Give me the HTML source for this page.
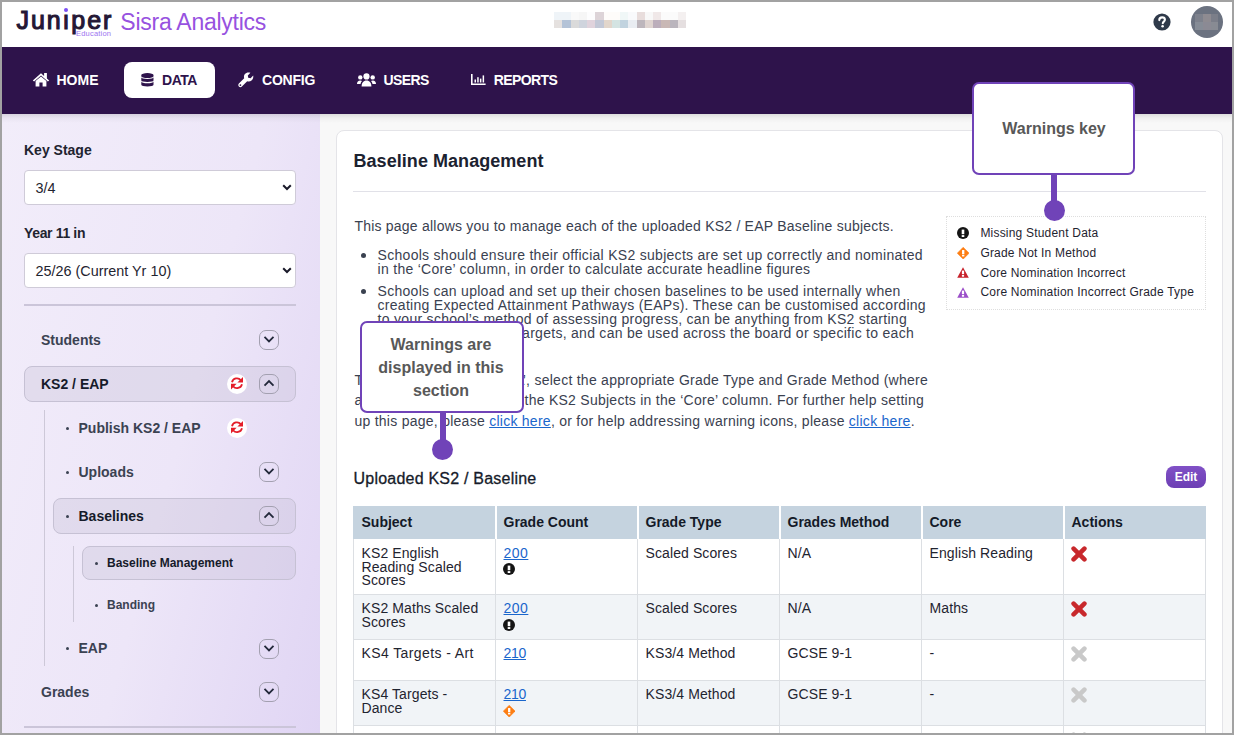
<!DOCTYPE html>
<html><head><meta charset="utf-8">
<style>
*{box-sizing:border-box}
html,body{margin:0;padding:0}
body{width:1234px;height:735px;overflow:hidden;position:relative;background:#f8f8f8;font-family:"Liberation Sans",sans-serif;color:#1f2937}
.a{position:absolute;white-space:nowrap}
#hdr{position:absolute;left:0;top:0;width:1234px;height:47px;background:#fff}
#nav{position:absolute;left:0;top:47px;width:1234px;height:67px;background:#2e134b}
.nt{position:absolute;font-weight:bold;font-size:14px;line-height:14px;color:#fff;margin-top:0.1px}
#side{position:absolute;left:0;top:114px;width:320px;height:621px;background:linear-gradient(105deg,#f2edfa 0%,#ede6f8 55%,#e0d5f4 100%)}
.lbl{position:absolute;font-weight:bold;font-size:14px;line-height:14px;color:#1f2430}
.sel{position:absolute;left:24px;width:272px;height:34.6px;background:#fff;border:1px solid #cfcbd8;border-radius:4px}
.it{position:absolute;font-weight:bold;font-size:14px;line-height:14px;color:#3b4252}
.box{position:absolute;background:rgba(195,190,212,0.32);border:1px solid #c6c1d4;border-radius:8px}
.chev{position:absolute;width:20px;height:20px;border:1.2px solid #a3a0b0;border-radius:7px}
.dot{position:absolute;width:3px;height:3px;border-radius:50%;background:#3b4252}
.vl{position:absolute;width:1px;background:#cdc8d8}
#card{position:absolute;left:336px;top:130px;width:887px;height:640px;background:#fff;border:1px solid #e4e4e8;border-radius:8px}
.tx{position:absolute;font-size:14px;line-height:14px;color:#3a4150;letter-spacing:0.25px;white-space:nowrap}
a{color:#1a66cc;text-decoration:underline}
.callout{position:absolute;width:163.5px;height:91px;background:#fff;border:2px solid #7043b8;border-radius:6px;color:#555;font-weight:bold;font-size:16px;text-align:center}
.stem{position:absolute;width:6px;background:#7043b8}
.pdot{position:absolute;width:21px;height:21px;border-radius:50%;background:#7043b8}
table{position:absolute;left:353px;top:506px;border-collapse:collapse;table-layout:fixed}
td,th{border:1px solid #dee2e6;padding:0 8px;vertical-align:top;font-size:14px;line-height:14px;color:#1f2430;text-align:left}
th{background:#c5d3df;border-color:#fff;border-bottom:0;font-weight:bold;height:33px;vertical-align:middle}
tr.g td{background:#f1f4f7}
.th{position:absolute;top:515px;font-weight:bold;font-size:14px;line-height:14px;color:#141a28;white-space:nowrap}
.td{position:absolute;font-size:14px;line-height:14px;color:#1f2430;white-space:nowrap;letter-spacing:0.1px}
.lk{letter-spacing:0.5px}
</style></head><body>

<!-- header -->
<div id="hdr">
  <div class="a" style="left:16.5px;top:7.5px;font-size:25px;line-height:25px;color:#241734;letter-spacing:1.9px;-webkit-text-stroke:1.1px #241734">Junıper</div>
  <div class="a" style="left:64px;top:8px;width:4.4px;height:4.4px;border-radius:50%;background:#7b4ff2"></div>
  <div class="a" style="left:76px;top:29.5px;font-size:7.5px;line-height:8px;color:#9c74f0;letter-spacing:0.2px">Education</div>
  <div class="a" style="left:120.3px;top:10.8px;font-size:23px;line-height:23px;color:#9752e0;letter-spacing:-0.25px">Sisra Analytics</div>
  <div class="a" style="left:554px;top:12px;width:132px;height:16px;display:grid;grid-template-columns:repeat(16,1fr);grid-template-rows:8px 8px">
    <i style="background:#eff4f8"></i><i style="background:#eff4f8"></i><i style="background:#f9f9f9"></i><i style="background:#f6f6f6"></i><i style="background:#fdfdfe"></i><i style="background:#ddd4d8"></i><i style="background:#fefcfa"></i><i style="background:#fefcfa"></i><i style="background:#f0f7f7"></i><i style="background:#f9fafc"></i><i style="background:#e8dddc"></i><i style="background:#f8f8f8"></i><i style="background:#f0e8e8"></i><i style="background:#fbfbfb"></i><i style="background:#fbfbfb"></i><i style="background:#f4f0f0"></i>
    <i style="background:#e5e1df"></i><i style="background:#b4c3d7"></i><i style="background:#dadada"></i><i style="background:#cfd4dd"></i><i style="background:#e0d3dc"></i><i style="background:#c3c8d6"></i><i style="background:#e2d6cb"></i><i style="background:#d4e4e2"></i><i style="background:#c1d3df"></i><i style="background:#e9edf2"></i><i style="background:#bdb6bc"></i><i style="background:#dfd4d0"></i><i style="background:#bcaebb"></i><i style="background:#c9b8b5"></i><i style="background:#bab5bd"></i><i style="background:#e5dfe0"></i>
  </div>
  <!-- help icon -->
  <svg class="a" style="left:1153px;top:13px" width="18" height="18" viewBox="0 0 18 18">
    <circle cx="9" cy="9" r="8.6" fill="#2f3a4a"/>
    <path d="M6.3 7.1 C6.3 5.3 7.6 4.4 9.1 4.4 C10.7 4.4 11.9 5.4 11.9 6.8 C11.9 8.6 9.8 8.7 9.8 10.3" stroke="#fff" stroke-width="2.1" fill="none" stroke-linecap="round"/>
    <circle cx="9.6" cy="13.2" r="1.3" fill="#fff"/>
  </svg>
  <!-- avatar -->
  <div class="a" style="left:1191px;top:6px;width:32px;height:32px;border-radius:50%;background:#6b7280;overflow:hidden">
    <div class="a" style="left:4px;top:8px;width:8px;height:8px;background:#7d818c"></div>
    <div class="a" style="left:12px;top:8px;width:8px;height:8px;background:#8e8b91"></div>
    <div class="a" style="left:20px;top:8px;width:7px;height:8px;background:#7b7e89"></div>
    <div class="a" style="left:4px;top:16px;width:8px;height:8px;background:#868c96"></div>
    <div class="a" style="left:12px;top:16px;width:8px;height:8px;background:#8b8a94"></div>
    <div class="a" style="left:20px;top:16px;width:7px;height:8px;background:#888b93"></div>
  </div>
</div>

<!-- nav -->
<div id="nav">
  <div class="a" style="left:124px;top:15px;width:91px;height:36px;background:#fff;border-radius:8px"></div>
</div>


<!-- nav icons & text -->
<svg class="a" style="left:32px;top:72px" width="18" height="15" viewBox="0 0 18 15">
  <path d="M9 1.2 L0.8 8.4 L2.1 9.6 L9 3.6 L15.9 9.6 L17.2 8.4 L14.9 6.4 V1 H12.1 V3.9 Z" fill="#fff"/>
  <path d="M3.6 9 L9 4.4 L14.4 9 V14.4 H10.6 V10.6 H7.4 V14.4 H3.6 Z" fill="#fff"/>
</svg>
<div class="nt" style="left:56.5px;top:73px">HOME</div>
<svg class="a" style="left:140.8px;top:73px" width="14" height="14" viewBox="0 0 14 14">
  <path d="M0.3 2 A6.1 1.9 0 0 1 12.5 2 V3.2 A6.1 1.7 0 0 1 0.3 3.2 Z" fill="#2e134b"/>
  <path d="M0.3 4.3 A6.1 1.7 0 0 0 12.5 4.3 V7.4 A6.1 1.7 0 0 1 0.3 7.4 Z" fill="#2e134b"/>
  <path d="M0.3 8.5 A6.1 1.7 0 0 0 12.5 8.5 V11.8 A6.1 1.7 0 0 1 0.3 11.8 Z" fill="#2e134b"/>
</svg>
<div class="nt" style="left:162px;top:73px;color:#2e134b;letter-spacing:-0.45px">DATA</div>
<svg class="a" style="left:238px;top:72px" width="16" height="16" viewBox="0 0 16 16">
  <path d="M15.2 3.6 L12.6 6.2 L10.2 5.8 L9.8 3.4 L12.4 0.8 C10.4 0 8.1 0.5 6.9 2 C5.9 3.2 5.7 4.9 6.2 6.3 L0.9 11.6 C0.1 12.4 0.1 13.7 0.9 14.6 C1.7 15.4 3.1 15.4 3.9 14.6 L9.2 9.3 C10.6 9.8 12.3 9.6 13.5 8.6 C15 7.4 15.6 5.4 15.2 3.6 Z" fill="#fff"/>
  <circle cx="2.4" cy="13.1" r="0.9" fill="#2e134b"/>
</svg>
<div class="nt" style="left:262px;top:73px;letter-spacing:-0.23px">CONFIG</div>
<svg class="a" style="left:357px;top:73px" width="19" height="14" viewBox="0 0 19 14">
  <circle cx="9.5" cy="3.4" r="3.1" fill="#fff"/>
  <circle cx="3.3" cy="4.4" r="2.2" fill="#fff"/>
  <circle cx="15.7" cy="4.4" r="2.2" fill="#fff"/>
  <path d="M4.6 13.6 C4.6 10 6.4 7.6 9.5 7.6 C12.6 7.6 14.4 10 14.4 13.6 Z" fill="#fff"/>
  <path d="M0 11 C0 8.6 1.2 7.4 3.2 7.4 C4 7.4 4.6 7.6 5 8 C4.2 8.8 3.7 9.8 3.5 11 Z" fill="#fff"/>
  <path d="M19 11 C19 8.6 17.8 7.4 15.8 7.4 C15 7.4 14.4 7.6 14 8 C14.8 8.8 15.3 9.8 15.5 11 Z" fill="#fff"/>
</svg>
<div class="nt" style="left:383.6px;top:73px;letter-spacing:-0.64px">USERS</div>
<svg class="a" style="left:471px;top:74px" width="15" height="11" viewBox="0 0 15 11">
  <path d="M0 0 H1.6 V9.4 H14.6 V11 H0 Z" fill="#fff"/>
  <rect x="3.5" y="5.5" width="1.5" height="3" fill="#fff"/>
  <rect x="6.2" y="3.2" width="1.5" height="5.3" fill="#fff"/>
  <rect x="8.9" y="4.6" width="1.5" height="3.9" fill="#fff"/>
  <rect x="11.6" y="1.4" width="1.5" height="7.1" fill="#fff"/>
</svg>
<div class="nt" style="left:493.8px;top:73px;letter-spacing:-0.6px">REPORTS</div>

<!-- sidebar -->
<div id="side">
</div>
<div style="position:absolute;left:0;top:114px;width:1234px;height:9px;background:linear-gradient(rgba(0,0,0,0.11),rgba(0,0,0,0.035) 45%,rgba(0,0,0,0))"></div>
<div class="lbl" style="left:24px;top:143px">Key Stage</div>
<div class="sel" style="top:170px"></div>
<div class="a" style="left:35.5px;top:180.8px;font-size:14.4px;line-height:14px;color:#1f2430">3/4</div>
<svg class="a" style="left:282px;top:184px" width="10" height="7" viewBox="0 0 10 7"><path d="M1.2 1.2 L5 5 L8.8 1.2" stroke="#1a1a2a" stroke-width="2" fill="none"/></svg>
<div class="lbl" style="left:24px;top:226px;letter-spacing:-0.35px">Year 11 in</div>
<div class="sel" style="top:253px"></div>
<div class="a" style="left:35.5px;top:263.8px;font-size:14.4px;line-height:14px;color:#1f2430">25/26 (Current Yr 10)</div>
<svg class="a" style="left:282px;top:267px" width="10" height="7" viewBox="0 0 10 7"><path d="M1.2 1.2 L5 5 L8.8 1.2" stroke="#1a1a2a" stroke-width="2" fill="none"/></svg>
<div class="a" style="left:24px;top:304px;width:272px;height:2px;background:#cbc5d9"></div>

<div class="it" style="left:41px;top:333px">Students</div>
<div class="chev" style="left:259px;top:330px"></div>
<svg class="a" style="left:263px;top:335px" width="12" height="9" viewBox="0 0 12 9"><path d="M1.5 1.9 L6 6.4 L10.5 1.9" stroke="#22283a" stroke-width="1.8" fill="none"/></svg>

<div class="box" style="left:24px;top:366px;width:272px;height:36px"></div>
<div class="it" style="left:41px;top:377px;color:#161b2a">KS2 / EAP</div>
<div class="a" style="left:227px;top:374px;width:20px;height:20px;border-radius:50%;background:#fff"></div>
<svg class="a" style="left:231px;top:377.4px" width="12" height="12.6" viewBox="0 0 12 12.6">
  <path d="M1 5.2 A5.1 5.1 0 0 1 9.9 3.2" stroke="#e41e2a" stroke-width="1.8" fill="none"/>
  <path d="M12 0 V5.6 H6.4 Z" fill="#e41e2a"/>
  <path d="M11 7.2 A5.1 5.1 0 0 1 2.1 9.2" stroke="#e41e2a" stroke-width="1.8" fill="none"/>
  <path d="M0 6.8 H5.6 L0 12.4 Z" fill="#e41e2a"/>
</svg>
<div class="chev" style="left:259px;top:374px"></div>
<svg class="a" style="left:263px;top:379px" width="12" height="9" viewBox="0 0 12 9"><path d="M1.5 6.6 L6 2.1 L10.5 6.6" stroke="#22283a" stroke-width="1.8" fill="none"/></svg>

<div class="vl" style="left:44px;top:410px;height:256px"></div>
<div class="dot" style="left:66px;top:427px"></div>
<div class="it" style="left:78.5px;top:421px">Publish KS2 / EAP</div>
<div class="a" style="left:227px;top:418px;width:20px;height:20px;border-radius:50%;background:#fff"></div>
<svg class="a" style="left:231px;top:421.4px" width="12" height="12.6" viewBox="0 0 12 12.6">
  <path d="M1 5.2 A5.1 5.1 0 0 1 9.9 3.2" stroke="#e41e2a" stroke-width="1.8" fill="none"/>
  <path d="M12 0 V5.6 H6.4 Z" fill="#e41e2a"/>
  <path d="M11 7.2 A5.1 5.1 0 0 1 2.1 9.2" stroke="#e41e2a" stroke-width="1.8" fill="none"/>
  <path d="M0 6.8 H5.6 L0 12.4 Z" fill="#e41e2a"/>
</svg>

<div class="dot" style="left:66px;top:471px"></div>
<div class="it" style="left:78.5px;top:465px">Uploads</div>
<div class="chev" style="left:259px;top:462px"></div>
<svg class="a" style="left:263px;top:467px" width="12" height="9" viewBox="0 0 12 9"><path d="M1.5 1.9 L6 6.4 L10.5 1.9" stroke="#22283a" stroke-width="1.8" fill="none"/></svg>

<div class="box" style="left:53px;top:498px;width:243px;height:36px"></div>
<div class="dot" style="left:66px;top:515px"></div>
<div class="it" style="left:78.5px;top:509px;color:#161b2a">Baselines</div>
<div class="chev" style="left:259px;top:506px"></div>
<svg class="a" style="left:263px;top:511px" width="12" height="9" viewBox="0 0 12 9"><path d="M1.5 6.6 L6 2.1 L10.5 6.6" stroke="#22283a" stroke-width="1.8" fill="none"/></svg>

<div class="vl" style="left:73px;top:546px;height:76px"></div>
<div class="box" style="left:82px;top:546px;width:214px;height:34px"></div>
<div class="dot" style="left:95px;top:562px"></div>
<div class="a" style="left:107px;top:556.9px;font-weight:bold;font-size:12px;line-height:12px;color:#161b2a">Baseline Management</div>
<div class="dot" style="left:95px;top:604px"></div>
<div class="a" style="left:107px;top:599.3px;font-weight:bold;font-size:12px;line-height:12px;color:#3b4252">Banding</div>

<div class="dot" style="left:66px;top:647px"></div>
<div class="it" style="left:78.5px;top:641px">EAP</div>
<div class="chev" style="left:259px;top:639px"></div>
<svg class="a" style="left:263px;top:644px" width="12" height="9" viewBox="0 0 12 9"><path d="M1.5 1.9 L6 6.4 L10.5 1.9" stroke="#22283a" stroke-width="1.8" fill="none"/></svg>

<div class="it" style="left:41px;top:685px">Grades</div>
<div class="chev" style="left:259px;top:682px"></div>
<svg class="a" style="left:263px;top:687px" width="12" height="9" viewBox="0 0 12 9"><path d="M1.5 1.9 L6 6.4 L10.5 1.9" stroke="#22283a" stroke-width="1.8" fill="none"/></svg>
<div class="a" style="left:24px;top:726px;width:272px;height:2px;background:#cbc5d9"></div>

<!-- card -->
<div id="card"></div>
<div class="a" style="left:353.5px;top:152px;font-size:18px;line-height:18px;font-weight:bold;color:#1b2230;letter-spacing:0.05px">Baseline Management</div>
<div class="a" style="left:353px;top:191px;width:853px;height:1px;background:#e1e1e8"></div>

<div class="tx" style="left:354.4px;top:219px;letter-spacing:0.22px">This page allows you to manage each of the uploaded KS2 / EAP Baseline subjects.</div>
<div class="a" style="left:361px;top:253px;width:5px;height:5px;border-radius:50%;background:#3a4150"></div>
<div class="tx" style="left:377.6px;top:247.9px;letter-spacing:0.287px">Schools should ensure their official KS2 subjects are set up correctly and nominated</div>
<div class="tx" style="left:377.6px;top:261.9px;letter-spacing:0.28px">in the ‘Core’ column, in order to calculate accurate headline figures</div>
<div class="a" style="left:361px;top:289px;width:5px;height:5px;border-radius:50%;background:#3a4150"></div>
<div class="tx" style="left:377.6px;top:283.6px;letter-spacing:0.276px">Schools can upload and set up their chosen baselines to be used internally when</div>
<div class="tx" style="left:377.6px;top:297.5px;letter-spacing:0.275px">creating Expected Attainment Pathways (EAPs). These can be customised according</div>
<div class="tx" style="left:377.6px;top:311.8px;letter-spacing:0.288px">to your school’s method of assessing progress, can be anything from KS2 starting</div>
<div class="tx" style="right:320px;top:326.4px;letter-spacing:0.28px">points, to GCSE targets, and can be used across the board or specific to each</div>
<div class="tx" style="left:377.6px;top:340.4px;letter-spacing:0.28px">cohort.</div>

<div class="tx" style="left:354.4px;top:372.6px;letter-spacing:0.26px">To edit subjects, click ‘Edit</div>
<div class="tx" style="right:306px;top:372.6px;letter-spacing:0.26px">’, select the appropriate Grade Type and Grade Method (where</div>
<div class="tx" style="left:354.4px;top:393px;letter-spacing:0.26px">applicable), and nominate</div>
<div class="tx" style="right:310px;top:393px;letter-spacing:0.26px">the KS2 Subjects in the ‘Core’ column. For further help setting</div>
<div class="tx" style="left:354.4px;top:413.5px;letter-spacing:0.263px">up this page, please <a>click here</a>, or for help addressing warning icons, please <a>click here</a>.</div>

<!-- warnings key -->
<div class="a" style="left:946px;top:216px;width:260px;height:94px;border:1px dotted #dedede"></div>
<svg class="a" style="left:957px;top:226.5px" width="12" height="12" viewBox="0 0 12 12"><circle cx="6" cy="6" r="6" fill="#151515"/><rect x="4.7" y="2.6" width="2.6" height="4.6" fill="#fff"/><rect x="4.7" y="8.1" width="2.6" height="1.9" fill="#fff"/></svg>
<svg class="a" style="left:956.8px;top:246.8px" width="12.4" height="12.4" viewBox="0 0 13 13"><path d="M6.5 0.3 L12.7 6.5 L6.5 12.7 L0.3 6.5 Z" fill="#fd7e14" stroke="#fd7e14" stroke-width="0.6" stroke-linejoin="round"/><rect x="5.3" y="3.2" width="2.4" height="4.2" fill="#fff"/><rect x="5.3" y="8.1" width="2.4" height="1.8" fill="#fff"/></svg>
<svg class="a" style="left:957px;top:267px" width="12" height="11" viewBox="0 0 12 11"><path d="M6 0.3 L11.8 10.8 H0.2 Z" fill="#c8232c"/><rect x="4.9" y="3.6" width="2.2" height="3.6" fill="#fff"/><rect x="4.9" y="8" width="2.2" height="1.7" fill="#fff"/></svg>
<svg class="a" style="left:957px;top:287px" width="12" height="11" viewBox="0 0 12 11"><path d="M6 0.3 L11.8 10.8 H0.2 Z" fill="#9b4fc9"/><rect x="4.9" y="3.6" width="2.2" height="3.6" fill="#fff"/><rect x="4.9" y="8" width="2.2" height="1.7" fill="#fff"/></svg>
<div class="a" style="left:980.4px;top:226.6px;font-size:12px;line-height:12px;color:#1f2430;letter-spacing:0.2px">Missing Student Data</div>
<div class="a" style="left:980.4px;top:246.5px;font-size:12px;line-height:12px;color:#1f2430;letter-spacing:0.2px">Grade Not In Method</div>
<div class="a" style="left:980.4px;top:266.5px;font-size:12px;line-height:12px;color:#1f2430;letter-spacing:0.2px">Core Nomination Incorrect</div>
<div class="a" style="left:980.4px;top:286.2px;font-size:12px;line-height:12px;color:#1f2430;letter-spacing:0.217px">Core Nomination Incorrect Grade Type</div>

<!-- Uploaded -->
<div class="a" style="left:353.5px;top:470.8px;font-size:16px;line-height:16px;color:#161b2a;letter-spacing:0.22px;-webkit-text-stroke:0.3px #161b2a">Uploaded KS2 / Baseline</div>
<div class="a" style="left:1166px;top:466px;width:40px;height:22px;border-radius:8px;background:linear-gradient(#8050c6,#6d3fb4)"></div>
<div class="a" style="left:1166px;top:471px;width:40px;text-align:center;font-size:12px;line-height:12px;font-weight:bold;color:#fff">Edit</div>

<!-- table -->
<div class="a" style="left:353px;top:506px;width:853px;height:33px;background:#c5d3df"></div>
<div class="a" style="left:353px;top:594px;width:853px;height:45px;background:#f1f4f7"></div>
<div class="a" style="left:353px;top:680px;width:853px;height:45px;background:#f1f4f7"></div>
<!-- vertical lines -->
<div class="a" style="left:353px;top:539px;width:1px;height:200px;background:#dcdfe3"></div>
<div class="a" style="left:1205px;top:539px;width:1px;height:200px;background:#dcdfe3"></div>
<div class="a" style="left:495px;top:539px;width:1px;height:200px;background:#dcdfe3"></div>
<div class="a" style="left:637px;top:539px;width:1px;height:200px;background:#dcdfe3"></div>
<div class="a" style="left:779px;top:539px;width:1px;height:200px;background:#dcdfe3"></div>
<div class="a" style="left:921px;top:539px;width:1px;height:200px;background:#dcdfe3"></div>
<div class="a" style="left:1063px;top:539px;width:1px;height:200px;background:#dcdfe3"></div>
<div class="a" style="left:495px;top:506px;width:1.5px;height:33px;background:#fff"></div>
<div class="a" style="left:637px;top:506px;width:1.5px;height:33px;background:#fff"></div>
<div class="a" style="left:779px;top:506px;width:1.5px;height:33px;background:#fff"></div>
<div class="a" style="left:921px;top:506px;width:1.5px;height:33px;background:#fff"></div>
<div class="a" style="left:1063px;top:506px;width:1.5px;height:33px;background:#fff"></div>
<!-- horizontal lines -->
<div class="a" style="left:353px;top:594px;width:853px;height:1px;background:#dcdfe3"></div>
<div class="a" style="left:353px;top:639px;width:853px;height:1px;background:#dcdfe3"></div>
<div class="a" style="left:353px;top:680px;width:853px;height:1px;background:#dcdfe3"></div>
<div class="a" style="left:353px;top:725px;width:853px;height:1px;background:#dcdfe3"></div>

<!-- header text -->
<div class="th" style="left:361.5px">Subject</div>
<div class="th" style="left:503.5px">Grade Count</div>
<div class="th" style="left:645.5px">Grade Type</div>
<div class="th" style="left:787.5px">Grades Method</div>
<div class="th" style="left:929.5px">Core</div>
<div class="th" style="left:1071.5px">Actions</div>

<!-- row1 -->
<div class="td" style="left:361.5px;top:545.9px">KS2 English</div>
<div class="td" style="left:361.5px;top:559.9px">Reading Scaled</div>
<div class="td" style="left:361.5px;top:573.4px">Scores</div>
<div class="td lk" style="left:503.5px;top:545.9px"><a>200</a></div>
<svg class="a" style="left:503px;top:563.4px" width="12" height="12" viewBox="0 0 12 12"><circle cx="6" cy="6" r="6" fill="#151515"/><rect x="4.7" y="2.6" width="2.6" height="4.6" fill="#fff"/><rect x="4.7" y="8.1" width="2.6" height="1.9" fill="#fff"/></svg>
<div class="td" style="left:645.5px;top:545.9px">Scaled Scores</div>
<div class="td" style="left:787.5px;top:545.9px">N/A</div>
<div class="td" style="left:929.5px;top:545.9px">English Reading</div>
<svg class="a x" style="left:1071px;top:546px" width="16" height="16" viewBox="0 0 16 16"><path d="M2.6 2.6 L13.4 13.4 M13.4 2.6 L2.6 13.4" stroke="#c8282c" stroke-width="4.6" stroke-linecap="round"/></svg>

<!-- row2 -->
<div class="td" style="left:361.5px;top:600.9px">KS2 Maths Scaled</div>
<div class="td" style="left:361.5px;top:614.6px">Scores</div>
<div class="td lk" style="left:503.5px;top:600.9px"><a>200</a></div>
<svg class="a" style="left:503px;top:618.8px" width="12" height="12" viewBox="0 0 12 12"><circle cx="6" cy="6" r="6" fill="#151515"/><rect x="4.7" y="2.6" width="2.6" height="4.6" fill="#fff"/><rect x="4.7" y="8.1" width="2.6" height="1.9" fill="#fff"/></svg>
<div class="td" style="left:645.5px;top:600.9px">Scaled Scores</div>
<div class="td" style="left:787.5px;top:600.9px">N/A</div>
<div class="td" style="left:929.5px;top:600.9px">Maths</div>
<svg class="a x" style="left:1071px;top:601px" width="16" height="16" viewBox="0 0 16 16"><path d="M2.6 2.6 L13.4 13.4 M13.4 2.6 L2.6 13.4" stroke="#c8282c" stroke-width="4.6" stroke-linecap="round"/></svg>

<!-- row3 -->
<div class="td" style="left:361.5px;top:646.2px;letter-spacing:0.4px">KS4 Targets - Art</div>
<div class="td" style="left:503.5px;top:646.2px;letter-spacing:-0.3px"><a>210</a></div>
<div class="td" style="left:645.5px;top:646.2px">KS3/4 Method</div>
<div class="td" style="left:787.5px;top:646.2px">GCSE 9-1</div>
<div class="td" style="left:929.5px;top:646.2px">-</div>
<svg class="a x" style="left:1071px;top:646px" width="16" height="16" viewBox="0 0 16 16"><path d="M2.6 2.6 L13.4 13.4 M13.4 2.6 L2.6 13.4" stroke="#c9c9c9" stroke-width="4.6" stroke-linecap="round"/></svg>

<!-- row4 -->
<div class="td" style="left:361.5px;top:687.4px">KS4 Targets -</div>
<div class="td" style="left:361.5px;top:701.1px">Dance</div>
<div class="td" style="left:503.5px;top:687.4px;letter-spacing:-0.3px"><a>210</a></div>
<svg class="a" style="left:502.8px;top:704.8px" width="12.4" height="12.4" viewBox="0 0 13 13"><path d="M6.5 0.3 L12.7 6.5 L6.5 12.7 L0.3 6.5 Z" fill="#fd7e14" stroke="#fd7e14" stroke-width="0.6" stroke-linejoin="round"/><rect x="5.3" y="3.2" width="2.4" height="4.2" fill="#fff"/><rect x="5.3" y="8.1" width="2.4" height="1.8" fill="#fff"/></svg>
<div class="td" style="left:645.5px;top:687.4px">KS3/4 Method</div>
<div class="td" style="left:787.5px;top:687.4px">GCSE 9-1</div>
<div class="td" style="left:929.5px;top:687.4px">-</div>
<svg class="a x" style="left:1071px;top:687px" width="16" height="16" viewBox="0 0 16 16"><path d="M2.6 2.6 L13.4 13.4 M13.4 2.6 L2.6 13.4" stroke="#c9c9c9" stroke-width="4.6" stroke-linecap="round"/></svg>
<!-- row5 partial -->
<svg class="a x" style="left:1071px;top:732px" width="16" height="16" viewBox="0 0 16 16"><path d="M2.6 2.6 L13.4 13.4 M13.4 2.6 L2.6 13.4" stroke="#c9c9c9" stroke-width="4.6" stroke-linecap="round"/></svg>

<!-- callouts -->
<div class="callout" style="left:971.8px;top:82px;height:92.5px;border-radius:7px"></div>
<div class="a" style="left:972.5px;top:120.6px;width:163px;text-align:center;font-size:16px;line-height:16px;font-weight:bold;color:#585858">Warnings key</div>
<div class="stem" style="left:1051.2px;top:174px;height:30px"></div>
<div class="pdot" style="left:1044px;top:200px"></div>

<div class="callout" style="left:360px;top:321.2px;width:164px;height:91.8px;border-radius:7px"></div>
<div class="a" style="left:359.5px;top:333px;width:163px;text-align:center;font-size:16px;line-height:23px;font-weight:bold;color:#585858;white-space:normal">Warnings are<br>displayed in this<br>section</div>
<div class="stem" style="left:439.5px;top:412px;height:30px"></div>
<div class="pdot" style="left:432px;top:439px"></div>


<!-- frame -->
<div class="a" style="left:0;top:0;width:1234px;height:2px;background:#a2a2a2"></div>
<div class="a" style="left:0;top:733px;width:1234px;height:2px;background:#a2a2a2"></div>
<div class="a" style="left:0;top:0;width:2px;height:735px;background:#a2a2a2"></div>
<div class="a" style="left:1232px;top:0;width:2px;height:735px;background:#a2a2a2"></div>
</body></html>
